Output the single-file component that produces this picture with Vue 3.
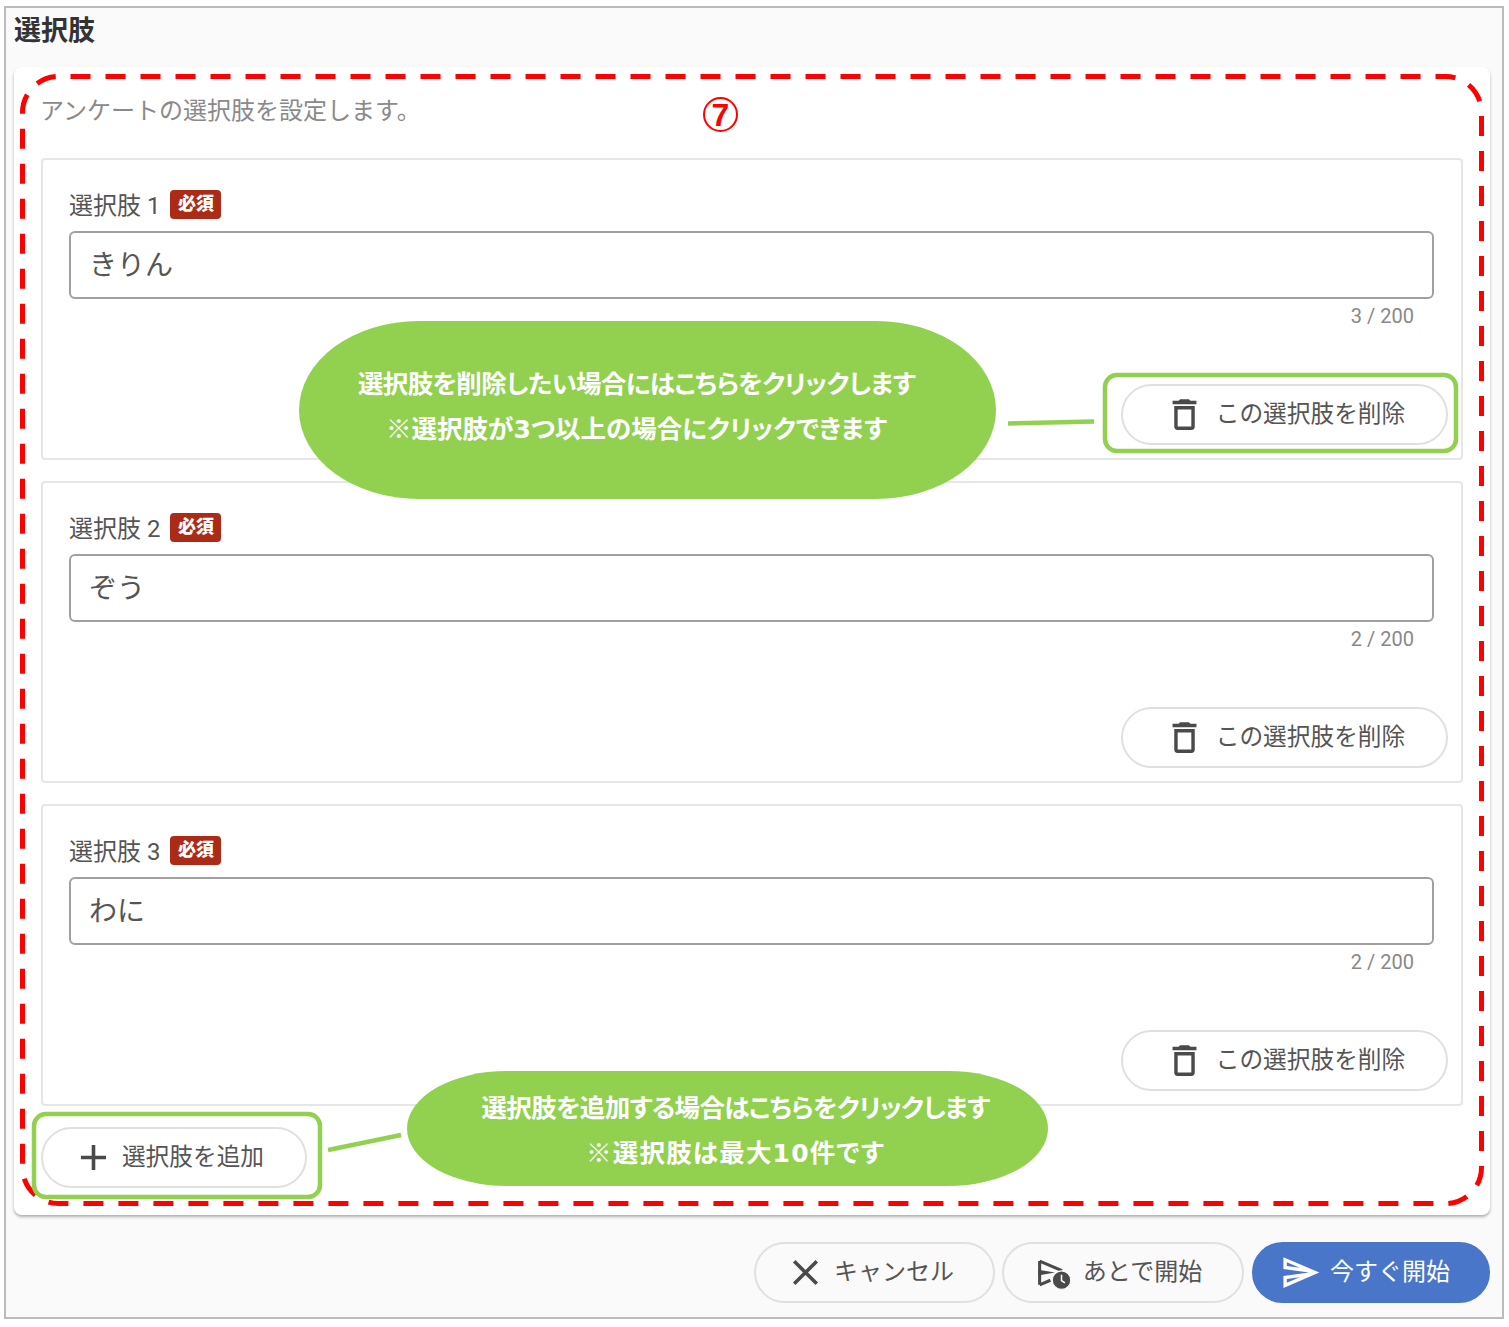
<template>
  <div class="page">
    <div class="frame">
      <h2 class="title">選択肢</h2>

      <section class="card">
        <p class="desc">アンケートの選択肢を設定します。</p>

        <div v-for="(choice, index) in choices" :key="index" class="item">
          <div class="label-row">
            <span class="label">選択肢 {{ index + 1 }}</span>
            <span class="badge">必須</span>
          </div>
          <input v-model="choices[index]" class="field" type="text" />
          <div class="counter">{{ choice.length }} / 200</div>
          <div class="item-actions">
            <button class="btn btn-delete" type="button" @click="removeChoice(index)">
              <svg class="icon" viewBox="0 0 24 24"><path d="M6 19a2 2 0 0 0 2 2h8a2 2 0 0 0 2-2V7H6v12zM8 9h8v10H8V9zm7.5-5l-1-1h-5l-1 1H5v2h14V4h-3.5z" /></svg>
              <span>この選択肢を削除</span>
            </button>
          </div>
        </div>

        <button class="btn btn-add" type="button" @click="addChoice">
          <svg class="icon icon-x" viewBox="0 0 24 24"><path d="M19 13h-6v6h-2v-6H5v-2h6V5h2v6h6v2z" /></svg>
          <span>選択肢を追加</span>
        </button>
      </section>

      <footer class="footer">
        <button class="btn btn-cancel" type="button">
          <svg class="icon icon-x" viewBox="0 0 24 24"><path d="M19 6.41 17.59 5 12 10.59 6.41 5 5 6.41 10.59 12 5 17.59 6.41 19 12 13.41 17.59 19 19 17.59 13.41 12z" /></svg>
          <span>キャンセル</span>
        </button>
        <button class="btn btn-later" type="button">
          <svg class="icon-later" viewBox="0 0 24 24">
            <path class="plane" d="M3 4.6 L17.5 10.8 M3 4.6 V20 M3 20 L10 17" />
            <path fill="#4a4a4a" d="M2 10.2 L13 12 L2 14 z" />
            <circle cx="17.2" cy="17" r="6" fill="#4a4a4a" stroke="#fafafa" stroke-width="0.8" />
            <path d="M17.2 13.4V17.2l2.2 1.5" fill="none" stroke="#fff" stroke-width="1" />
          </svg>
          <span>あとで開始</span>
        </button>
        <button class="btn btn-start" type="button">
          <svg class="icon" viewBox="0 0 24 24"><path d="M4.01 6.03l7.51 3.22-7.52-1 .01-2.22m7.5 8.72L4 17.97v-2.22l7.51-1M2.01 3L2 10l15 2-15 2 .01 7L23 12 2.01 3z" /></svg>
          <span>今すぐ開始</span>
        </button>
      </footer>
    </div>

    <!-- annotations drawn on top of the screen -->
    <svg class="marks" viewBox="0 0 1509 1327">
      <rect class="dash" x="22.5" y="76.5" width="1459" height="1127" rx="36" ry="36" />
      <rect class="hl" x="1105" y="375" width="351" height="76" rx="12" />
      <rect class="hl" x="34" y="1114" width="286" height="83" rx="12" />
      <line class="hl" x1="1008" y1="423.5" x2="1094" y2="421.5" />
      <line class="hl" x1="328" y1="1150" x2="401" y2="1135" />
    </svg>
    <span class="step">7</span>
    <div class="bubble bubble-delete">
      <p class="tight">選択肢を削除したい場合にはこちらをクリックします</p>
      <p>※選択肢が<span class="num">3</span>つ以上の場合にクリックできます</p>
    </div>
    <div class="bubble bubble-add">
      <p class="tight">選択肢を追加する場合はこちらをクリックします</p>
      <p class="wide">※選択肢は最大<span class="num">10</span>件です</p>
    </div>
  </div>
</template>

<script setup>
import { ref } from 'vue'

const choices = ref(['きりん', 'ぞう', 'わに'])

function addChoice() {
  if (choices.value.length < 10) choices.value.push('')
}

function removeChoice(index) {
  if (choices.value.length > 2) choices.value.splice(index, 1)
}
</script>

<style>
body {
  margin: 0;
  background: #fff;
}
</style>

<style scoped>
.page {
  position: relative;
  width: 1509px;
  height: 1327px;
  padding: 6px 5px 8px 4px;
  box-sizing: border-box;
  font-family: Roboto, "Noto Sans CJK JP", sans-serif;
  color: #555;
}

.frame {
  height: 100%;
  box-sizing: border-box;
  padding: 0 12px 0 8px;
  background: #fafafa;
  border: 2px solid #bbb;
}

.title {
  height: 59px;
  margin: 0;
  font-size: 27px;
  font-weight: 700;
  line-height: 47px;
  color: #333;
}

.card {
  padding: 27px;
  background: #fff;
  border-radius: 8px;
  box-shadow: 0 2px 3px rgba(0, 0, 0, 0.3);
}

.desc {
  height: 34px;
  margin: 0 0 30px -1px;
  font-size: 24px;
  font-weight: 400;
  line-height: 35px;
  color: #8a8a8a;
}

.item {
  height: 302px;
  box-sizing: border-box;
  margin-bottom: 21px;
  padding: 30px 13px 0 26px;
  border: 2px solid #e6e6e6;
  border-radius: 4px;
}

.label-row {
  display: flex;
  align-items: center;
  gap: 10px;
  height: 29px;
}

.label {
  padding-top: 2px;
  font-size: 24px;
  font-weight: 400;
  line-height: 28px;
}

.badge {
  width: 51px;
  height: 29px;
  font-size: 18px;
  font-weight: 900;
  line-height: 28px;
  text-align: center;
  color: #fff;
  background: #ab2b17;
  border-radius: 4px;
}

.field {
  display: block;
  width: 1365px;
  height: 68px;
  box-sizing: border-box;
  margin-top: 12px;
  padding: 0 18px 4px;
  font-family: inherit;
  font-size: 28px;
  font-weight: 400;
  color: #555;
  background: #fff;
  border: 2px solid #a0a0a0;
  border-radius: 6px;
  outline: none;
}

.counter {
  width: 1345px;
  height: 34px;
  font-size: 20px;
  line-height: 34px;
  text-align: right;
  color: #888;
}

.item-actions {
  display: flex;
  justify-content: flex-end;
  margin-top: 51px;
}

.btn {
  display: flex;
  align-items: center;
  justify-content: center;
  height: 61px;
  box-sizing: border-box;
  padding: 0 0 6px;
  font-family: inherit;
  font-size: 24px;
  font-weight: 400;
  color: #555;
  background: #fff;
  border: 2px solid #e0e0e0;
  border-radius: 31px;
  cursor: pointer;
}

.icon {
  flex: none;
  width: 41px;
  height: 41px;
  margin-top: 6px;
  margin-right: 11px;
  fill: #4a4a4a;
}

.icon-x {
  width: 43px;
  height: 43px;
  margin-right: 7px;
}

.btn-delete {
  width: 327px;
  font-size: 23.7px;
}

.btn-add {
  width: 266px;
  padding-right: 12px;
  font-size: 23.7px;
}

.footer {
  display: flex;
  justify-content: flex-end;
  gap: 7px;
  margin-top: 27px;
}

.btn-cancel {
  width: 241px;
  padding-right: 11px;
  background: #fafafa;
}

.btn-later {
  width: 242px;
  padding-right: 9px;
  background: #fafafa;
}

.icon-later {
  flex: none;
  width: 37px;
  height: 37px;
  margin-top: 6px;
  margin-right: 11px;
}

.plane {
  fill: none;
  stroke: #4a4a4a;
  stroke-width: 2;
}

.btn-start {
  width: 238px;
  margin-left: 1px;
  padding-right: 12px;
  color: #fff;
  background: #4a76c9;
  border-color: #4a76c9;
}

.btn-start .icon {
  margin-right: 9px;
  fill: #fff;
}

.marks {
  position: absolute;
  top: 0;
  left: 0;
  width: 1509px;
  height: 1327px;
  pointer-events: none;
}

.dash {
  fill: none;
  stroke: #ff0000;
  stroke-width: 5;
  stroke-dasharray: 20 15;
  stroke-dashoffset: 23;
}

.hl {
  fill: none;
  stroke: #92d050;
  stroke-width: 4.5;
}

.step {
  position: absolute;
  top: 97px;
  left: 703px;
  width: 35px;
  height: 35px;
  box-sizing: border-box;
  border: 2px solid #ff0000;
  border-radius: 50%;
  font-family: "Liberation Sans", sans-serif;
  font-size: 32px;
  font-weight: 700;
  line-height: 32px;
  text-align: center;
  color: #ff0000;
}

.bubble {
  position: absolute;
  display: flex;
  flex-direction: column;
  align-items: center;
  justify-content: center;
  gap: 13px;
  box-sizing: border-box;
  background: #92d050;
  font-family: "Noto Sans CJK JP", sans-serif;
  font-size: 25.5px;
  font-weight: 700;
  font-feature-settings: "palt";
  line-height: 32px;
  color: #fff;
}

.bubble p {
  margin: 0;
}

.bubble .tight {
  letter-spacing: -0.65px;
}

.bubble .wide {
  letter-spacing: 1.2px;
}

.num {
  font-family: "DejaVu Sans", sans-serif;
  font-size: 25px;
}

.bubble-delete {
  top: 321px;
  left: 299px;
  width: 697px;
  height: 178px;
  padding: 0 22px 8px 0;
  border-radius: 120px / 89px;
}

.bubble-add {
  top: 1071px;
  left: 407px;
  width: 641px;
  height: 115px;
  padding: 2px 0 0 16px;
  border-radius: 100px / 57.5px;
}
</style>
